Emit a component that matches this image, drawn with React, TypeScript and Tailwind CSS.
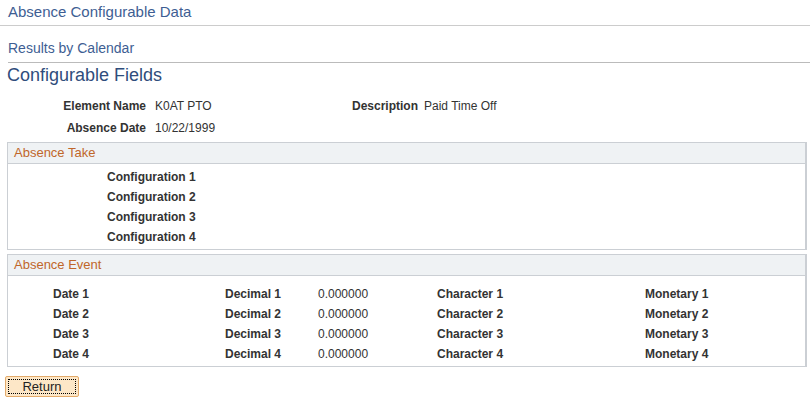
import React from "react";

const font = { fontFamily: '"Liberation Sans", Arial, sans-serif' };

export default function App() {
  const cfg = ["Configuration 1", "Configuration 2", "Configuration 3", "Configuration 4"];
  const rows = [1, 2, 3, 4];
  return (
    <div className="w-[810px] h-[399px] bg-white text-[#333] overflow-hidden relative" style={font}>
      <div className="h-[26px] border-b border-[#cccccc] flex items-center pl-[8px]">
        <span className="text-[15px] text-[#3e5e93] leading-none -mt-[2px]">Absence Configurable Data</span>
      </div>
      <div className="ml-[8px] mt-[14px] h-[23px] border-b border-[#bbbbbb] flex items-start">
        <span className="text-[14px] text-[#3e5e93] leading-[16px]">Results by Calendar</span>
      </div>
      <div className="pl-[7px] pt-[2px] text-[18px] text-[#2f4d7c] leading-[20px]">Configurable Fields</div>
      <div className="mt-[10px] text-[12px]">
        <div className="flex h-[22px] items-center">
          <div className="w-[146px] text-right font-bold">Element Name</div>
          <div className="w-[206px] pl-[9px]">K0AT PTO</div>
          <div className="w-[64px] text-right font-bold">Description</div>
          <div className="pl-[8px]">Paid Time Off</div>
        </div>
        <div className="flex h-[22px] items-center">
          <div className="w-[146px] text-right font-bold">Absence Date</div>
          <div className="pl-[9px]">10/22/1999</div>
        </div>
      </div>
      <div className="ml-[7px] w-[800px] mt-[3px] border border-[#cbcfd4] border-r-2">
        <div className="h-[21px] bg-[#eff2f4] border-b border-[#cbcfd4] flex items-center pl-[6px] text-[13px] text-[#c0662a]">Absence Take</div>
        <div className="pt-[3px] pb-[2px] text-[12px] font-bold">
          {cfg.map((c) => (
            <div key={c} className="h-[20px] flex items-center pl-[99px]">{c}</div>
          ))}
        </div>
      </div>
      <div className="ml-[7px] w-[800px] mt-[4px] border border-[#cbcfd4] border-r-2">
        <div className="h-[21px] bg-[#eff2f4] border-b border-[#cbcfd4] flex items-center pl-[6px] text-[13px] text-[#c0662a]">Absence Event</div>
        <div className="pt-[8px] pb-[2px] text-[12px]">
          {rows.map((n) => (
            <div key={n} className="h-[20px] flex items-center">
              <div className="w-[217px] pl-[45px] font-bold">Date {n}</div>
              <div className="w-[93px] font-bold">Decimal {n}</div>
              <div className="w-[119px]">0.000000</div>
              <div className="w-[208px] font-bold">Character {n}</div>
              <div className="font-bold">Monetary {n}</div>
            </div>
          ))}
        </div>
      </div>
      <div className="ml-[5px] mt-[7px]">
        <button className="w-[74px] h-[21px] rounded-[2px] border border-[#e3aa6a] bg-[#fde7c7] p-[2px] text-[13px] text-[#222] leading-none">
          <span className="flex w-full h-full items-center justify-center border border-dotted border-black">Return</span>
        </button>
      </div>
    </div>
  );
}
